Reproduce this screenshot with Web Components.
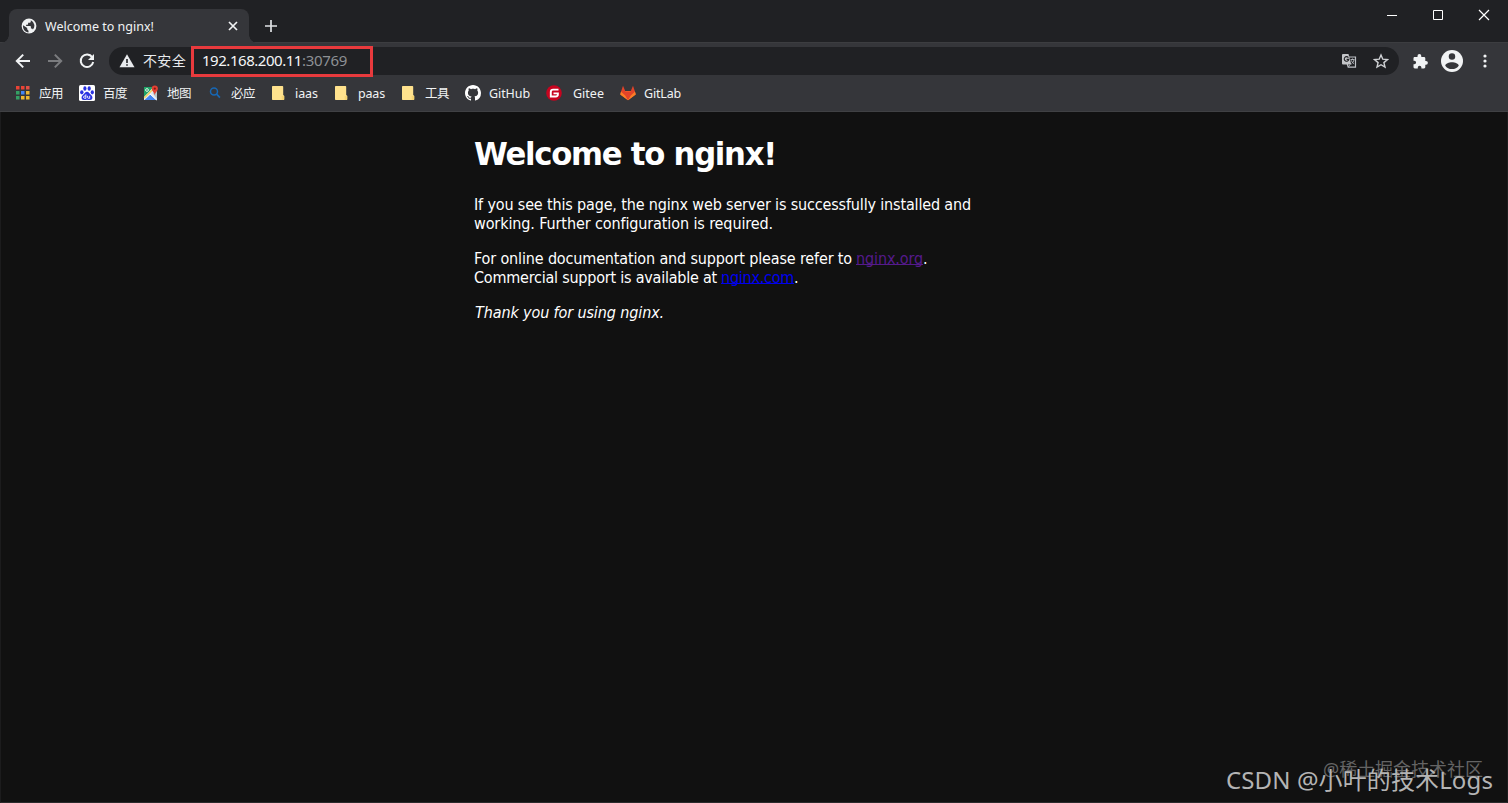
<!DOCTYPE html>
<html lang="zh-CN">
<head>
<meta charset="utf-8">
<title>Welcome to nginx!</title>
<style>
html,body{margin:0;height:100%;background:#111;overflow:hidden}
</style>
</head>
<body>
<browser-window></browser-window>
<script>
const define = (name, html, setup) => {
  const tpl = document.createElement('template');
  tpl.innerHTML = html;
  customElements.define(name, class extends HTMLElement {
    constructor() {
      super();
      this.attachShadow({ mode: 'open' }).append(tpl.content.cloneNode(true));
    }
    connectedCallback() { if (setup) setup(this, this.shadowRoot); }
  });
};

/* Single line of text, tracked to fill a given width; "squeeze" narrows the glyphs first. */
define('fit-text', `<style>
:host{display:inline-block;white-space:pre}
span{display:inline-block;transform-origin:0 50%}
</style><span><slot></slot></span>`, (el, root) => {
  const w = +el.getAttribute('w');
  const k = +(el.getAttribute('squeeze') || 1);
  const span = root.querySelector('span');
  const n = [...el.textContent].length;
  span.style.transform = 'none';
  span.style.letterSpacing = '0px';
  const natural = span.getBoundingClientRect().width;
  span.style.letterSpacing = ((w / k - natural) / n) + 'px';
  if (k !== 1) span.style.transform = `scaleX(${k})`;
  el.style.width = w + 'px';
});

const icons = {
  globe: `<circle cx="8" cy="8" r="7.4" fill="#f1f3f4"/><path d="M2.1 7.2 6.2 10v1.3l1.3 1.4v1.7C4.2 14 2 11.600 2 8zM9.800 2.300v1.100c0 .8-.6 1.400-1.400 1.400H7.100v1.300c0 .4-.3.700-.7.700H5.100V8h4.100c.4 0 .7.3.7.7v1.900h.7c.6 0 1.100.4 1.300 1A5.900 5.900 0 0 0 9.800 2.300z" fill="#35363a"/>`,
  back: `<path d="M15 8H2M8.200 1.600 1.800 8l6.400 6.400" fill="none" stroke="#f1f3f4" stroke-width="2"/>`,
  forward: `<path d="M1 8h13M7.800 1.600 14.200 8l-6.400 6.400" fill="none" stroke="#7b7c7f" stroke-width="2"/>`,
  reload: `<path d="M13.200 4.100A6.300 6.300 0 1 0 14.200 9" fill="none" stroke="#f1f3f4" stroke-width="2"/><path d="M15 1v6H9z" fill="#f1f3f4"/>`,
  warn: `<path d="M8 1.300 15.500 14.300H.5z" fill="#e8eaed"/><path d="M7.200 6h1.600v4H7.200zM7.200 11.200h1.600v1.600H7.200z" fill="#202124"/>`,
  translate: `<path d="M6 4h8.500v10.200H7.200L6 10" fill="none" stroke="#bdc1c6" stroke-width="1.200"/><path d="M2 1h5.500l2.800 10.500H2a1 1 0 0 1-1-1V2a1 1 0 0 1 1-1z" fill="#c3c5c8"/><path d="M7.400 4.600A2.300 2.300 0 1 0 7.800 6.400H5.600" fill="none" stroke="#202124" stroke-width="1.100"/><path d="M9.500 6.500h4M11.500 5.500v1M13 6.800c-.4 2-1.400 3.200-2.500 4M10.400 7.400c.6 1.700 1.500 2.700 2.700 3.500M9 11.500l-1.500 2.300" fill="none" stroke="#bdc1c6" stroke-width=".9"/>`,
  star: `<path d="m8 2 1.800 4.200 4.600.4-3.500 3 1.100 4.500L8 11.700l-4 2.400 1.100-4.500-3.500-3 4.600-.4z" fill="none" stroke="#d0d2d5" stroke-width="1.400"/>`,
  puzzle: `<path d="M1.500 5.200c0-.8.600-1.300 1.300-1.300h2.700V3a1.900 1.900 0 0 1 3.800 0v.9H12c.8 0 1.300.6 1.300 1.300v2.700h.7a1.900 1.900 0 0 1 0 3.800h-.7v2.300c0 .8-.6 1.400-1.300 1.400H9.400v-.8a1.800 1.800 0 0 0-3.600 0v.8h-3c-.7 0-1.300-.6-1.300-1.400v-2.700h.8a1.800 1.800 0 0 0 0-3.600h-.8z" fill="#f1f3f4"/>`,
  person: `<circle cx="8" cy="8" r="8" fill="#f1f3f4"/><circle cx="8" cy="4.750" r="2.350" fill="#35363a"/><path d="M8 8.900c-2.100 0-4.900 1-4.900 2.500C4.200 13 5.900 13.900 8 13.900s3.800-.9 4.900-2.500c0-1.500-2.800-2.500-4.900-2.500z" fill="#35363a"/>`,
  dots: `<g fill="#f1f3f4"><circle cx="8" cy="3" r="1.600"/><circle cx="8" cy="8" r="1.600"/><circle cx="8" cy="13" r="1.600"/></g>`,
  min: `<path d="M3 8.500h10" stroke="#fff" fill="none"/>`,
  max: `<path d="M3.500 3.500h9v9h-9z" stroke="#fff" fill="none"/>`,
  close: `<path d="m3 3 10 10M13 3 3 13" stroke="#fff" stroke-width="1.200" fill="none"/>`,
  tabclose: `<path d="m4 4 8 8M12 4l-8 8" stroke="#f1f3f4" stroke-width="1.700" fill="none"/>`,
  plus: `<path d="M8 2v12M2 8h12" stroke="#e0e2e5" stroke-width="1.700" fill="none"/>`,
  apps: `<g><path d="M1 1h3.500v3.500H1zM6 1h3.500v3.500H6z" fill="#ea4335"/><path d="M11 1h3.500v3.500H11z" fill="#e34f43"/><path d="M1 6h3.500v3.500H1z" fill="#34a064"/><path d="M6 6h3.500v3.500H6z" fill="#4285f4"/><path d="M11 6h3.500v3.500H11z" fill="#eab634"/><path d="M1 11h3.500v3.500H1z" fill="#34a064"/><path d="M6 11h3.500v3.500H6zM11 11h3.500v3.500H11z" fill="#f0b831"/></g>`,
  baidu: `<rect width="16" height="16" rx="1.500" fill="#fff"/><g fill="#2932e1"><ellipse cx="2.800" cy="7.300" rx="1.700" ry="2.100"/><ellipse cx="5.900" cy="3.500" rx="1.600" ry="2.300"/><ellipse cx="10.200" cy="3.500" rx="1.600" ry="2.300"/><ellipse cx="13.300" cy="7.300" rx="1.600" ry="2.100"/><path d="M8 6.700c1.900 0 2.500 2.100 4.300 3.500 1.700 1.400 1.500 4.700-1.100 4.800-1.200.1-2-.3-3.200-.3s-2 .4-3.200.3C2.200 14.900 2 11.600 3.700 10.200 5.500 8.800 6.100 6.700 8 6.700z"/></g><path d="M6.900 9.300v4H5.700a1.100 1.100 0 0 1 0-2.300h1.200M8.600 10.800v1.700c0 .5.300.8.800.8h1.300v-2.500" fill="none" stroke="#fff" stroke-width=".9"/>`,
  maps: `<path d="M1 2h13v13H1z" fill="#e8eaed"/><path d="M1 2h9.500L1 12z" fill="#20a467"/><path d="m1.500 15 6-5.500 6 5.500z" fill="#4285f4"/><path d="m9.500 8 4.500-2v8z" fill="#b8c7cb"/><path d="m1.300 13 9.500-9.500" stroke="#f2d45c" stroke-width="1.500"/><path d="m7 9 6.500 6" stroke="#fff"/><circle cx="4" cy="5" r="1.400" fill="none" stroke="#dcefe4"/><path d="M11.800 10.200C11.400 7.400 8.700 6.300 8.700 3.600a3.100 3.100 0 0 1 6.200 0c0 2.700-2.700 3.800-3.100 6.600z" fill="#e34133"/><circle cx="11.800" cy="3.600" r="1.100" fill="#7e1712"/>`,
  search: `<circle cx="7" cy="6.500" r="3.500" fill="none" stroke="#1768b5" stroke-width="1.500"/><path d="m9.600 9.200 3.300 3.500" stroke="#1768b5" stroke-width="1.700"/>`,
  folder: `<path d="M1.700 1h9.800c.4 0 .7.3.7.7v8.200l1 .8v3.600c0 .4-.3.700-.7.700H1.700c-.4 0-.7-.3-.7-.7V1.700c0-.4.300-.7.700-.7z" fill="#ffe28d"/><path d="M10.700 11h2.500v3.500c0 .3-.2.500-.5.500h-2z" fill="#f7d572"/>`,
  github: `<path fill="#fff" d="M8 0C3.580 0 0 3.580 0 8c0 3.540 2.290 6.530 5.470 7.590.4.070.55-.17.550-.38 0-.19-.01-.82-.01-1.490-2.010.37-2.530-.49-2.690-.94-.09-.23-.48-.94-.82-1.130-.28-.15-.68-.52-.01-.53.63-.01 1.080.58 1.230.82.72 1.210 1.870.87 2.330.66.07-.52.28-.87.51-1.070-1.780-.2-3.640-.89-3.640-3.950 0-.87.31-1.590.82-2.150-.08-.2-.36-1.020.08-2.120 0 0 .67-.21 2.200.82.64-.18 1.320-.27 2-.27s1.360.09 2 .27c1.530-1.040 2.200-.82 2.200-.82.44 1.100.16 1.920.08 2.120.51.56.82 1.270.82 2.150 0 3.070-1.870 3.750-3.650 3.950.29.25.54.73.54 1.480 0 1.070-.01 1.930-.01 2.200 0 .21.15.46.55.38A8.010 8.010 0 0 0 16 8c0-4.420-3.580-8-8-8z"/>`,
  gitee: `<circle cx="8" cy="8" r="7.800" fill="#c7041f"/><path d="M12.500 4.600H7.100c-1.400 0-2.300 1-2.300 2.300v4.600h4.900c1.400 0 2.200-.8 2.200-2.200V8.400H7.500" fill="none" stroke="#fff" stroke-width="1.900"/>`,
  gitlab: `<path d="M8 15.200.3 9.500 1.200 6h13.600l.9 3.500z" fill="#fc6d26"/><path d="M1 6.800 3 .8l2.400 5.600h5.200L13 .8l2 6-2.600 3L8 15.200 3.600 9.800z" fill="#e24329"/><path d="M.3 9.500 1 6.800l4.200 3.700L8 15.200zM15.700 9.500 15 6.800l-4.200 3.700L8 15.200z" fill="#fc7d26"/>`
};
define('ui-icon', `<style>:host{display:block;flex:none;width:16px;height:16px}svg{display:block;width:100%;height:100%}</style><svg viewBox="0 0 16 16"></svg>`, (el, root) => {
  root.querySelector('svg').innerHTML = icons[el.getAttribute('name')];
  const s = el.getAttribute('size');
  if (s) el.style.width = el.style.height = s + 'px';
});

define('tab-strip', `<style>
:host{display:flex;align-items:flex-start;height:42px;background:#202124;border-bottom:1px solid #3c3d40;box-sizing:content-box}
.tab{position:relative;display:flex;align-items:center;box-sizing:border-box;width:240px;height:34px;margin:9px 0 0 9px;padding:0 8px 0 12px;background:#35363a;border-radius:8px 8px 0 0;font-size:12.500px;color:#f1f3f4}
.tab::before,.tab::after{content:"";position:absolute;bottom:0;width:8px;height:8px}
.tab::before{left:-8px;background:radial-gradient(circle at 0 0,transparent 7.500px,#35363a 8px)}
.tab::after{right:-8px;background:radial-gradient(circle at 100% 0,transparent 7.500px,#35363a 8px)}
fit-text{margin:2px 0 0 8px;line-height:18px}
.x{margin-left:auto}
.new{margin:18px 0 0 14px}
.win{display:flex;gap:30px;margin:7px 16px 0 auto}
</style>
<div class="tab"><ui-icon name="globe"></ui-icon><fit-text w="109">Welcome to nginx!</fit-text><ui-icon class="x" name="tabclose"></ui-icon></div>
<ui-icon class="new" name="plus"></ui-icon>
<div class="win"><ui-icon name="min"></ui-icon><ui-icon name="max"></ui-icon><ui-icon name="close"></ui-icon></div>`);

define('address-bar', `<style>
:host{display:flex;align-items:center;height:36px;padding:0 15px 0 15px;background:#35363a}
.nav{display:flex;gap:16px}
.pill{display:flex;align-items:center;box-sizing:border-box;width:1290px;height:28px;margin-left:14px;padding:0 10px;border-radius:14px;background:#202124;color:#e8eaed}
.safe{margin-left:8px;font-size:14px;line-height:20px}
.url{display:flex;align-items:center;box-sizing:border-box;width:182px;height:31px;margin-left:5px;padding:0 0 2px 8px;border:3px solid #e83a3d;font-size:15px;color:#f5f6f7}
.port{color:#8d9094}
.actions{display:flex;gap:16px;margin-left:auto}
.right{display:flex;align-items:center;margin-left:auto}
.right ui-icon + ui-icon{margin-left:13px}
.right ui-icon:last-child{margin-left:14px}
</style>
<div class="nav"><ui-icon name="back"></ui-icon><ui-icon name="forward"></ui-icon><ui-icon name="reload"></ui-icon></div>
<div class="pill"><ui-icon name="warn"></ui-icon><fit-text class="safe" w="43">不安全</fit-text>
<div class="url"><fit-text w="100">192.168.200.11</fit-text><fit-text class="port" w="45">:30769</fit-text></div>
<div class="actions"><ui-icon name="translate"></ui-icon><ui-icon name="star"></ui-icon></div></div>
<div class="right"><ui-icon name="puzzle"></ui-icon><ui-icon name="person" size="22"></ui-icon><ui-icon name="dots"></ui-icon></div>`);

define('book-mark', `<style>
:host{display:flex;align-items:center;flex:none;color:#f1f3f4;font-size:12.500px;line-height:18px}
fit-text{margin:2px 0 0 var(--gap,8px)}
</style><ui-icon></ui-icon><fit-text></fit-text>`, (el, root) => {
  const icon = document.createElement('ui-icon');
  icon.setAttribute('name', el.getAttribute('icon'));
  const label = document.createElement('fit-text');
  label.setAttribute('w', el.getAttribute('w'));
  label.textContent = el.getAttribute('label');
  root.querySelector('ui-icon').replaceWith(icon);
  root.querySelector('fit-text').replaceWith(label);
});

define('bookmarks-bar', `<style>
:host{display:flex;align-items:center;gap:16px;height:28px;padding:0 0 4px 15px;background:#35363a;border-bottom:1px solid #404144}
</style>
<book-mark icon="apps" label="应用" w="24"></book-mark>
<book-mark icon="baidu" label="百度" w="24"></book-mark>
<book-mark icon="maps" label="地图" w="24"></book-mark>
<book-mark icon="search" label="必应" w="24"></book-mark>
<book-mark icon="folder" label="iaas" w="23"></book-mark>
<book-mark icon="folder" label="paas" w="27"></book-mark>
<book-mark icon="folder" label="工具" w="24"></book-mark>
<book-mark icon="github" label="GitHub" w="41"></book-mark>
<book-mark icon="gitee" label="Gitee" w="31" style="--gap:11px"></book-mark>
<book-mark icon="gitlab" label="GitLab" w="37"></book-mark>`);

define('nginx-page', `<style>
:host{display:block;width:560px;margin:0 auto;color:#fff;font:16px/19px "DejaVu Sans Condensed","DejaVu Sans",sans-serif;font-stretch:condensed}
h1{margin:23px 0 21px;font-size:32px;line-height:39px;font-weight:bold;font-family:"DejaVu Sans",sans-serif;font-stretch:normal}
section{margin:0 0 16px}
.l{display:flex;height:19px}
a{height:15px;line-height:19px;margin-left:4px;border-bottom:1px solid currentColor;text-decoration:none}
.org{color:#551a8b}
.com{color:#0000ee}
em{margin-left:1px}
</style>
<h1><fit-text w="302" squeeze=".96">Welcome to nginx!</fit-text></h1>
<section><div class="l"><fit-text w="497">If you see this page, the nginx web server is successfully installed and</fit-text></div>
<div class="l"><fit-text w="299">working. Further configuration is required.</fit-text></div></section>
<section><div class="l"><fit-text w="378">For online documentation and support please refer to</fit-text><a class="org"><fit-text w="67">nginx.org</fit-text></a><span>.</span></div>
<div class="l"><fit-text w="243">Commercial support is available at</fit-text><a class="com"><fit-text w="73">nginx.com</fit-text></a><span>.</span></div></section>
<section><em><fit-text w="189">Thank you for using nginx.</fit-text></em></section>`);

define('water-mark', `<style>
:host{position:absolute;right:0;bottom:0;width:290px;height:56px;font-family:"Noto Sans","Noto Sans CJK SC",sans-serif;pointer-events:none}
div{position:absolute;white-space:nowrap}
.back{left:105px;top:9px;font-size:18px;line-height:27px;color:#646464}
.front{left:8px;top:15px;font-size:24px;line-height:36px;color:#b4b4b4}
</style>
<div class="back"><fit-text w="160">@稀土掘金技术社区</fit-text></div>
<div class="front"><fit-text w="267">CSDN @小叶的技术Logs</fit-text></div>`);

define('browser-window', `<style>
:host{display:flex;flex-direction:column;position:relative;box-sizing:border-box;width:100vw;height:100vh;overflow:hidden;background:#111;font-family:"Noto Sans","Noto Sans CJK SC",sans-serif}
main{flex:1;box-sizing:border-box;border:1px solid #1c1c1d;border-top:0;border-bottom-color:#2b2b2c}
</style>
<tab-strip></tab-strip><address-bar></address-bar><bookmarks-bar></bookmarks-bar>
<main><nginx-page></nginx-page></main><water-mark></water-mark>`);
</script>
</body>
</html>
